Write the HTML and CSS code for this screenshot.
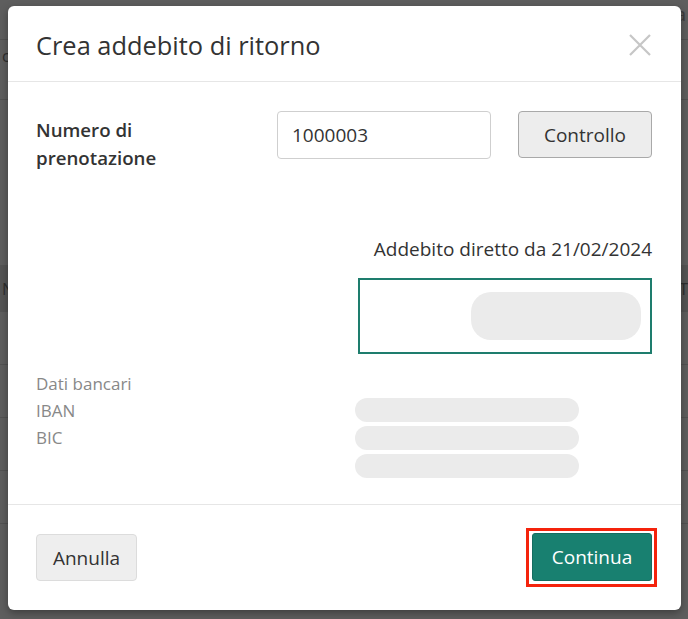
FILE: index.html
```html
<!DOCTYPE html>
<html lang="it">
<head>
<meta charset="utf-8">
<title>Crea addebito di ritorno</title>
<link rel="stylesheet" href="styles.css">
</head>
<body>
<div class="page">
  <div class="topbar">
    <span class="search"><span class="search-ring"></span>Cerca o crea</span>
  </div>
  <div class="subbar"><span class="sub-letter">c</span></div>
  <div class="spacer"></div>
  <div class="thead"><span>N</span><span>T</span></div>
  <div class="trow"></div>
  <div class="trow"></div>
  <div class="trow"></div>
  <div class="trow"></div>
</div>

<div class="modal">
  <div class="modal-header">
    <h1 class="modal-title">Crea addebito di ritorno</h1>
    <button class="close" aria-label="Chiudi">
      <svg width="22" height="22" viewBox="0 0 22 22"><path d="M1 1 L21 21 M21 1 L1 21" stroke="#c6c6c6" stroke-width="2.2" fill="none"/></svg>
    </button>
  </div>
  <div class="modal-body">
    <div class="booking-row">
      <label class="booking-label">Numero di<br>prenotazione</label>
      <input class="booking-input" type="text" value="1000003">
      <button class="btn btn-check">Controllo</button>
    </div>
    <div class="debit-title">Addebito diretto da 21/02/2024</div>
    <div class="debit-box-wrap">
      <div class="debit-box"><div class="skeleton skeleton-big"></div></div>
    </div>
    <div class="bank">
      <div class="bank-labels">
        <div class="bank-head">Dati bancari</div>
        <div>IBAN</div>
        <div>BIC</div>
      </div>
      <div class="bank-values">
        <div class="skeleton skeleton-line"></div>
        <div class="skeleton skeleton-line"></div>
        <div class="skeleton skeleton-line"></div>
      </div>
    </div>
  </div>
  <div class="modal-footer">
    <button class="btn btn-cancel">Annulla</button>
    <span class="highlight"><button class="btn btn-primary">Continua</button></span>
  </div>
</div>
</body>
</html>
```

FILE: styles.css
```css
* { box-sizing: border-box; }
html, body { margin: 0; padding: 0; }
body {
  width: 688px;
  height: 619px;
  overflow: hidden;
  background: #5e5e5e;
  font-family: "Open Sans", "Liberation Sans", sans-serif;
  color: #333;
  position: relative;
}

/* background page (dimmed) */
.page { width: 688px; height: 619px; display: flex; flex-direction: column; overflow: hidden; }
.topbar { height: 40px; border-bottom: 1px solid #525252; display: flex; justify-content: flex-end; }
.search { color: #3c3c3c; font-size: 19px; line-height: 20px; margin-top: -11px; margin-right: 2px; display: flex; align-items: center; gap: 12px; }
.search-ring { width: 16px; height: 16px; border: 1.5px solid #404040; border-radius: 50%; display: inline-block; }
.subbar { height: 60px; border-bottom: 1px solid #525252; display: flex; align-items: center; }
.sub-letter { color: #2e2e2e; font-size: 16px; margin-left: 2px; margin-top: -28px; }
.spacer { height: 165px; }
.thead { height: 47px; background: #545454; display: flex; justify-content: space-between; align-items: center; font-size: 16px; color: #2e2e2e; padding: 0 0 0 2px; }
.thead span:last-child { margin-right: 0; }
.trow { height: 53px; border-bottom: 1px solid #525252; }

/* modal */
.modal {
  position: absolute;
  left: 8px;
  top: 6px;
  width: 673px;
  height: 604px;
  background: #fff;
  border-radius: 6px;
  box-shadow: 0 3px 8px rgba(0,0,0,0.35);
  display: flex;
  flex-direction: column;
}
.modal-header {
  height: 76px;
  border-bottom: 1px solid #e6e6e6;
  display: flex;
  align-items: center;
  justify-content: space-between;
  padding: 0 30px 0 28px;
}
.modal-title { margin: 0; font-size: 25.4px; font-weight: 400; color: #333; padding-top: 2px; }
.close { background: none; border: 0; padding: 0; width: 22px; height: 22px; display: flex; cursor: pointer; margin-top: 2px; }

.modal-body { flex: 1; padding: 29px 29px 0 28px; display: flex; flex-direction: column; }
.booking-row { display: flex; align-items: flex-start; }
.booking-label { width: 241px; font-size: 18.7px; font-weight: 600; line-height: 28px; padding-top: 5px; color: #333; }
.booking-input {
  width: 214px; height: 48px;
  border: 1px solid #cfcfcf; border-radius: 4px;
  font-family: inherit; font-size: 19px; color: #333;
  padding: 0 14px;
  outline: none;
}
.btn {
  font-family: inherit; font-size: 19px; border-radius: 4px; cursor: pointer;
}
.btn-check {
  margin-left: 27px; width: 134px; height: 47px;
  background: #ededed; border: 1px solid #a9a9a9; color: #333;
}
.debit-title { text-align: right; font-size: 19px; margin-top: 64px; line-height: 26px; }
.debit-box-wrap { display: flex; justify-content: flex-end; margin-top: 16px; }
.debit-box {
  width: 294px; height: 76px;
  border: 2px solid #1e7d6d;
  display: flex; justify-content: flex-end; align-items: center;
  padding-right: 9px;
}
.skeleton { background: #ebebeb; }
.skeleton-big { width: 170px; height: 48px; border-radius: 20px; }

.bank { display: flex; margin-top: 16px; font-size: 17px; color: #888; }
.bank-labels { width: 319px; line-height: 27px; }
.bank-values { display: flex; flex-direction: column; gap: 4px; padding-top: 28px; }
.skeleton-line { width: 224px; height: 24px; border-radius: 12px; }

.modal-footer {
  height: 106px;
  border-top: 1px solid #e6e6e6;
  display: flex; justify-content: space-between; align-items: flex-start;
  padding: 29px 24px 0 28px;
}
.btn-cancel { width: 101px; height: 47px; background: #eeeeee; border: 1px solid #dcdcdc; color: #333; }
.highlight {
  display: flex;
  margin-top: -6px;
  border: 3px solid #f4230c;
  padding: 2px 2px 3px 3px;
}
.btn-primary {
  width: 120px; height: 48px; background: #188070; border: 1px solid #146d60; color: #fff;
  border-radius: 3px;
}
```
